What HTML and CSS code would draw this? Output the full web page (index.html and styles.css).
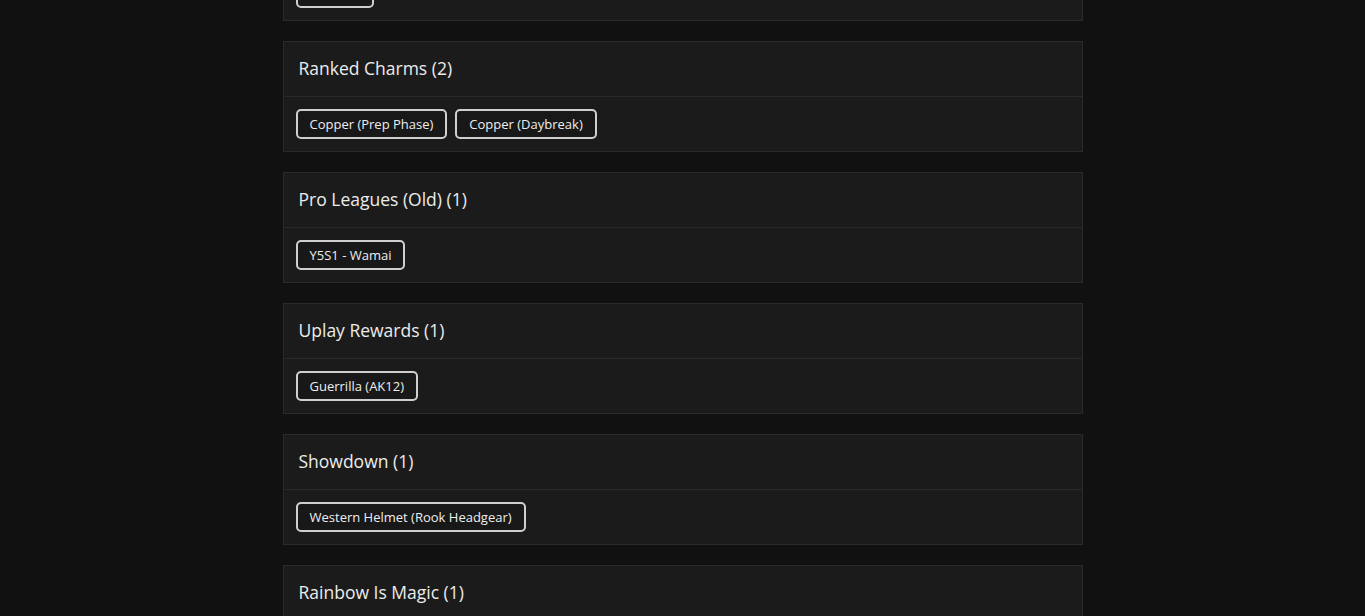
FILE: index.html
```html
<!DOCTYPE html>
<html>
<head>
<meta charset="utf-8">
<link rel="stylesheet" href="styles.css">
</head>
<body>
<main class="list">
  <section class="card">
    <div class="card-head">Pro Leagues (New) (1)</div>
    <div class="card-body"><span class="tag">Y6S2 Ela</span></div>
  </section>
  <section class="card">
    <div class="card-head">Ranked Charms (2)</div>
    <div class="card-body"><span class="tag">Copper (Prep Phase)</span><span class="tag">Copper (Daybreak)</span></div>
  </section>
  <section class="card">
    <div class="card-head">Pro Leagues (Old) (1)</div>
    <div class="card-body"><span class="tag">Y5S1 - Wamai</span></div>
  </section>
  <section class="card">
    <div class="card-head">Uplay Rewards (1)</div>
    <div class="card-body"><span class="tag">Guerrilla (AK12)</span></div>
  </section>
  <section class="card">
    <div class="card-head">Showdown (1)</div>
    <div class="card-body"><span class="tag">Western Helmet (Rook Headgear)</span></div>
  </section>
  <section class="card">
    <div class="card-head">Rainbow Is Magic (1)</div>
    <div class="card-body"><span class="tag">Unicorn Charm</span></div>
  </section>
</main>
</body>
</html>
```
FILE: styles.css
```css
html, body {
  margin: 0;
  padding: 0;
  background: #111111;
  overflow: hidden;
}
body {
  font-family: "Open Sans", "Liberation Sans", sans-serif;
  color: #e8e8e8;
}
.list {
  width: 800px;
  margin: -90px auto 0;
  display: flex;
  flex-direction: column;
  gap: 20px;
}
.card {
  background: #1b1b1b;
  border: 1px solid #2a2a2a;
  box-sizing: border-box;
}
.card-head {
  height: 55px;
  box-sizing: border-box;
  padding: 0 15px 3px;
  display: flex;
  align-items: center;
  font-size: 17.5px;
  font-weight: 500;
  border-bottom: 1px solid #2a2a2a;
  color: #ececec;
}
.card-body {
  padding: 12px;
  display: flex;
  gap: 8px;
}
.tag {
  height: 30px;
  box-sizing: border-box;
  border: 2px solid #cfcfcf;
  border-radius: 5px;
  padding: 0 12px;
  display: inline-flex;
  align-items: center;
  font-size: 13px;
  color: #eeeeee;
  background: #181818;
}
```
